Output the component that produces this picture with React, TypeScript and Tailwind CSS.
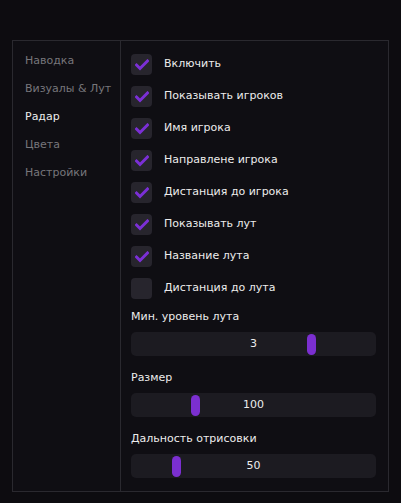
import React from 'react';

const tabs = ['Наводка', 'Визуалы & Лут', 'Радар', 'Цвета', 'Настройки'];

const toggles = [
  { label: 'Включить', on: true },
  { label: 'Показывать игроков', on: true },
  { label: 'Имя игрока', on: true },
  { label: 'Направлене игрока', on: true },
  { label: 'Дистанция до игрока', on: true },
  { label: 'Показывать лут', on: true },
  { label: 'Название лута', on: true },
  { label: 'Дистанция до лута', on: false },
];

const sliders = [
  { label: 'Мин. уровень лута', value: '3', pos: 176 },
  { label: 'Размер', value: '100', pos: 60 },
  { label: 'Дальность отрисовки', value: '50', pos: 41 },
];

const Check = ({ on }: { on: boolean }) => (
  <div className="w-[21px] h-[21px] rounded-[4px] bg-[#27252d] flex items-center justify-center">
    {on && (
      <svg width="14" height="12" viewBox="0 0 14 12">
        <path d="M1.5 6 L5 9.5 L12.5 2" fill="none" stroke="#7b2fd6" strokeWidth="3" strokeLinecap="square" />
      </svg>
    )}
  </div>
);

export default function App() {
  return (
    <div className="w-[401px] h-[503px] bg-[#0d0c10] pt-[40px] pl-[12px] font-['DejaVu_Sans',sans-serif] text-[11px]">
      <div className="w-[377px] h-[452px] border border-[#2a292f] bg-[#0f0e13] flex">
        <div className="w-[108px] border-r border-[#2a292f] pl-[12px] pt-[12px] flex flex-col gap-[12px]">
          {tabs.map((t) => (
            <div key={t} className={`h-[16px] leading-[16px] ${t === 'Радар' ? 'text-[#ececec]' : 'text-[#77767b]'}`}>
              {t}
            </div>
          ))}
        </div>
        <div className="flex-1 pl-[10px] pr-[12px] pt-[13px]">
          <div className="flex flex-col gap-[11px]">
            {toggles.map((t) => (
              <div key={t.label} className="flex items-center gap-[12px] h-[21px]">
                <Check on={t.on} />
                <span className="text-[#ececec]">{t.label}</span>
              </div>
            ))}
          </div>
          <div className="flex flex-col mt-[10px] gap-[14px]">
            {sliders.map((s) => (
              <div key={s.label} className="flex flex-col">
                <div className="text-[#ececec] h-[16px] leading-[16px] mb-[7px]">{s.label}</div>
                <div className="relative h-[24px] rounded-[5px] bg-[#1c1b21] flex items-center justify-center text-[#ececec]">
                  {s.value}
                  <div
                    className="absolute top-[2px] w-[9px] h-[21px] rounded-full bg-[#7b2fd0]"
                    style={{ left: s.pos }}
                  />
                </div>
              </div>
            ))}
          </div>
        </div>
      </div>
    </div>
  );
}
